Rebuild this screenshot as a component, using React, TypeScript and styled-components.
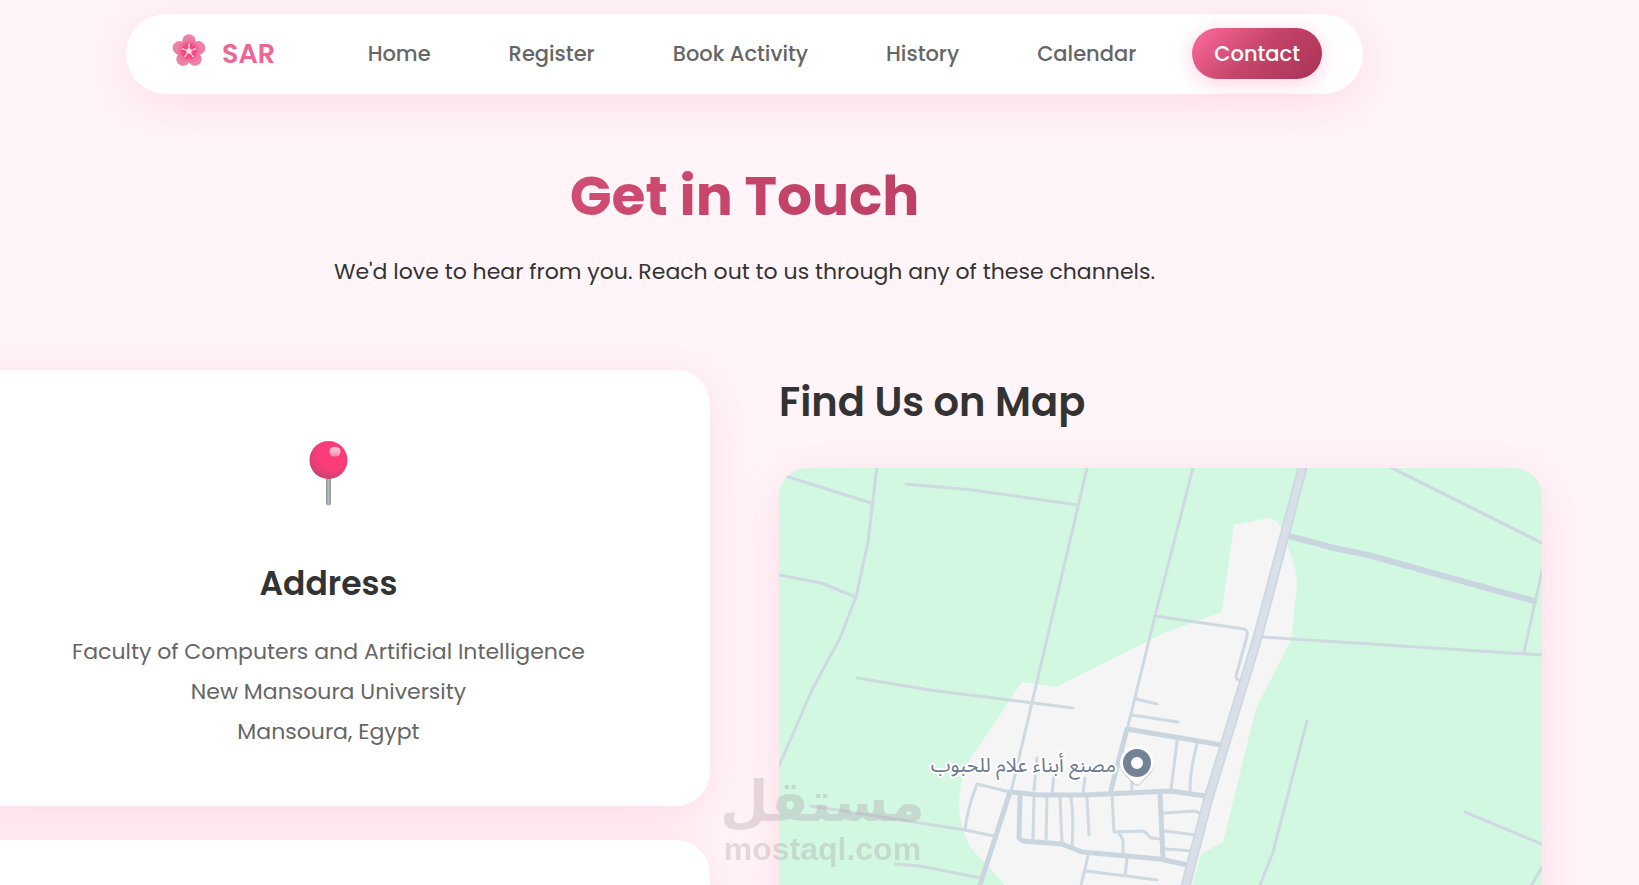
import React from "react";
import styled, { createGlobalStyle } from "styled-components";

const GlobalStyle = createGlobalStyle`
  *, *::before, *::after { box-sizing: border-box; }
  html, body { margin: 0; background: #fff5f8; }
  body {
    font-family: Poppins, Inter, "Liberation Sans", sans-serif;
    color: #333;
    overflow-x: hidden;
  }
  h1, h2, h3, p, ul { margin: 0; padding: 0; }
`;

const Page = styled.div`
  position: relative;
  height: 100vh;
  overflow: hidden;
  padding: 14px 150px 0 0;
`;

const Nav = styled.nav`
  display: flex;
  align-items: center;
  justify-content: space-between;
  height: 80px;
  margin: 0 126px;
  padding: 0 41px 1px 46px;
  border-radius: 40px;
  background: #fff;
  box-shadow: 0 10px 50px rgba(255, 107, 157, 0.18);
`;

const Brand = styled.a`
  display: flex;
  align-items: center;
  gap: 16px;
  color: #f06595;
  font-size: 27px;
  font-weight: 600;
  text-decoration: none;

  svg { margin-bottom: 6px; }
`;

const NavList = styled.ul`
  display: flex;
  gap: 34px;
  list-style: none;
`;

const NavLink = styled.a<{ $active?: boolean }>`
  display: block;
  padding: 0 22px;
  border-radius: 26px;
  font-size: 21px;
  font-weight: 500;
  line-height: 51px;
  white-space: nowrap;
  text-decoration: none;
  color: ${(p) => (p.$active ? "#fff" : "#666")};
  background: ${(p) =>
    p.$active ? "linear-gradient(135deg, #ff6b9d 0%, #c44569 50%, #a83256 100%)" : "none"};
  box-shadow: ${(p) => (p.$active ? "0 4px 20px rgba(255, 107, 157, 0.3)" : "none")};
`;

const Hero = styled.header`
  padding: 60px 0 78px;
  text-align: center;
`;

const Title = styled.h1`
  font-size: 55px;
  font-weight: 700;
  line-height: 84px;
  color: transparent;
  background: linear-gradient(135deg, #ff6b9d 0%, #c44569 50%, #a83256 100%);
  -webkit-background-clip: text;
  background-clip: text;
`;

const Lead = styled.p`
  margin-top: 14px;
  font-size: 22px;
  line-height: 40px;
`;

const Columns = styled.main`
  display: grid;
  grid-template-columns: 1fr 1fr;
  align-items: start;
  gap: 69px;
  margin: 0 -53px;
`;

const Cards = styled.section`
  display: grid;
  gap: 34px;
`;

const Card = styled.article`
  min-height: 436px;
  padding: 70px 40px 54px;
  border-radius: 34px;
  background: #fff;
  text-align: center;
  box-shadow: 0 10px 50px rgba(255, 107, 157, 0.18);

  svg { display: block; margin: 0 auto; }
`;

const CardTitle = styled.h3`
  margin: 54px 0 24px;
  font-size: 33px;
  font-weight: 600;
  line-height: 48px;
`;

const CardText = styled.p`
  font-size: 22px;
  line-height: 40px;
  color: #666;
`;

const MapTitle = styled.h2`
  margin: 2px 0 36px;
  font-size: 40px;
  font-weight: 600;
  line-height: 60px;
`;

const MapFrame = styled.div`
  overflow: hidden;
  border-radius: 28px;
  background: #d3f8e2;
  box-shadow: 0 10px 50px rgba(255, 107, 157, 0.18);

  svg { display: block; width: 100%; height: auto; }
`;

const MapLabel = styled.text`
  font-family: "Noto Sans Arabic", "DejaVu Sans", sans-serif;
  font-size: 20px;
  direction: rtl;
  fill: #6b7a90;
  stroke: #fff;
  stroke-width: 4px;
  stroke-linejoin: round;
  paint-order: stroke;
`;

const Watermark = styled.div`
  position: absolute;
  left: 720px;
  bottom: 18px;
  text-align: center;
  font-weight: 700;
  color: #a898a2;
  opacity: 0.3;
  pointer-events: none;
`;

const WatermarkArabic = styled.div`
  font-family: "DejaVu Sans", sans-serif;
  font-size: 56px;
  line-height: 58px;
`;

const WatermarkLatin = styled.div`
  font-family: "Liberation Sans", Arial, sans-serif;
  font-size: 32px;
  line-height: 36px;
`;

const Blossom = () => (
  <svg width="34" height="34" viewBox="-17 -17 34 34" aria-hidden="true">
    <defs>
      <radialGradient id="petal" gradientUnits="userSpaceOnUse" cx="0" cy="0" r="17">
        <stop offset="0.3" stopColor="#f2568a" />
        <stop offset="0.7" stopColor="#ee7fa5" />
        <stop offset="1" stopColor="#ec86a9" />
      </radialGradient>
    </defs>
    {[0, 72, 144, 216, 288].map((a) => (
      <ellipse key={a} cx="0" cy="-10" rx="6.8" ry="6.8" fill="url(#petal)" transform={`rotate(${a})`} />
    ))}
    <circle r="7" fill="#f0628f" />
    {[0, 72, 144, 216, 288].map((a) => (
      <path key={a} d="M-2-3 L-4-8 L0-6 L4-8 L2-3Z" fill="#f93b78" transform={`rotate(${a})`} />
    ))}
    {[0, 72, 144, 216, 288].map((a) => (
      <g key={a} transform={`rotate(${a})`}>
        <path d="M0 0V-6" stroke="#fbe3ec" strokeWidth="1.2" strokeLinecap="round" />
        <circle cy="-6.3" r="0.9" fill="#fbe3ec" />
      </g>
    ))}
    <circle r="2.6" fill="#fbe3ec" />
  </svg>
);

const Pushpin = () => (
  <svg width="40" height="66" viewBox="0 0 40 66" aria-hidden="true">
    <defs>
      <radialGradient id="ball" cx="0.62" cy="0.32" r="0.72">
        <stop offset="0.6" stopColor="#f93d78" />
        <stop offset="1" stopColor="#c9406c" />
      </radialGradient>
      <linearGradient id="stick">
        <stop offset="0" stopColor="#8d959c" />
        <stop offset="0.5" stopColor="#b4b9be" />
        <stop offset="1" stopColor="#90989f" />
      </linearGradient>
      <linearGradient id="shine" x1="0" y1="0" x2="0" y2="1">
        <stop offset="0" stopColor="#fbd3e0" />
        <stop offset="1" stopColor="#f986a9" />
      </linearGradient>
    </defs>
    <rect x="17" y="36" width="5" height="29.5" rx="2.5" fill="url(#stick)" />
    <circle cx="19.5" cy="20" r="19" fill="url(#ball)" />
    <rect x="20.5" y="7" width="11" height="9.5" rx="4.5" fill="url(#shine)" />
  </svg>
);

const CityMap = () => (
  <svg viewBox="779 468 763 520" role="img" aria-label="Map">
    <path
      fill="#f5f5f5"
      d="M1234 525L1268 518Q1279 519 1282 531L1290 553L1296 572L1297 585L1291 640L1256 708L1223 842L1201 854L1188 900H1016L1004 884L971 848Q958 825 959 800Q961 770 975 752L1022 682L1056 687L1164 633L1222 612Z"
    />
    <g fill="none" strokeLinecap="round" strokeLinejoin="round">
      <g stroke="#ced9e1" strokeWidth="3">
        <path d="M779 474L871 503M877 466L868 542L856 597L840 638L812 690L779 766M779 575L821 583L856 597" />
        <path d="M906 484L972 490L1078 505M1088 464L1011 792M1194 464L1155 616L1127 730" />
        <path d="M857 678L930 690L1073 708M811 806L965 830L994 836M895 864L920 866L981 878" />
        <path d="M1388 466L1542 543M1542 571L1524 652M1262 637L1542 655M1307 721L1273 852L1259 888" />
        <path d="M1465 812L1542 844M1542 867L1530 888" />
        <path d="M1155 616L1244 629Q1248 630 1247 636L1236 676Q1236 680 1242 681" />
        <path d="M1136 699L1157 704M1132 715L1178 722" />
        <path d="M1010 792L977 784Q967 810 965 830M1037 758L1034 790M1054 775L1052 793M1085 778L1083 793M1132 781V791" />
        <path d="M1034 796L1033 838M1047 796L1046 839M1060 797L1062 843M1071 797Q1074 820 1072 848M1087 797L1089 835" />
        <path d="M1112 795L1114 832L1144 831L1151 838L1160 839M1119 833L1123 840L1123 854" />
        <path d="M1177 741L1171 790M1197 744Q1190 770 1190 791M1164 813L1195 811L1202 814M1165 831L1196 835M1166 849L1193 851" />
        <path d="M1088 856L1080 890M1086 871L1126 876L1157 880M1127 859L1125 876" />
      </g>
      <g stroke="#cad6df" strokeWidth="5">
        <path d="M1289 536L1334 548L1368 555L1534 601" strokeWidth="6" />
        <path d="M1111 790L1127 729L1222 745M1010 792L1040 795L1085 795L1170 791L1206 796" />
        <path d="M1010 792L979 888M1020 796L1019 838L1023 841L1062 844L1082 852L1160 859L1188 865M1160 794L1163 858" />
      </g>
      <path d="M1304 462L1258 636L1208 800L1184 892" stroke="#cbd7e0" strokeWidth="10" />
      <path d="M1304 462L1258 636L1208 800L1184 892" stroke="#d8dfe8" strokeWidth="7" />
    </g>
    <MapLabel x="1116" y="772">مصنع أبناء علام للحبوب</MapLabel>
    <path
      d="M1137 747a17 17 0 0 1 17 17c0 7-5 11-9 15l-6 6q-2 1-4 0l-6-6c-4-4-9-8-9-15a17 17 0 0 1 17-17Z"
      fill="#8f9aa8"
      opacity="0.6"
    />
    <path
      d="M1137 746a17 17 0 0 1 17 17c0 7-5 11-9 15l-6 6q-2 1-4 0l-6-6c-4-4-9-8-9-15a17 17 0 0 1 17-17Z"
      fill="#fff"
    />
    <circle cx="1137" cy="763" r="10" fill="none" stroke="#748296" strokeWidth="8" />
  </svg>
);

const links = ["Home", "Register", "Book Activity", "History", "Calendar", "Contact"];

export default function App() {
  return (
    <>
      <GlobalStyle />
      <Page>
        <Nav>
          <Brand href="#home">
            <Blossom />
            SAR
          </Brand>
          <NavList>
            {links.map((label) => (
              <li key={label}>
                <NavLink href={`#${label.toLowerCase().replace(" ", "-")}`} $active={label === "Contact"}>
                  {label}
                </NavLink>
              </li>
            ))}
          </NavList>
        </Nav>
        <Hero>
          <Title>Get in Touch</Title>
          <Lead>We'd love to hear from you. Reach out to us through any of these channels.</Lead>
        </Hero>
        <Columns>
          <Cards>
            <Card>
              <Pushpin />
              <CardTitle>Address</CardTitle>
              <CardText>
                Faculty of Computers and Artificial Intelligence
                <br />
                New Mansoura University
                <br />
                Mansoura, Egypt
              </CardText>
            </Card>
            <Card />
          </Cards>
          <section>
            <MapTitle>Find Us on Map</MapTitle>
            <MapFrame>
              <CityMap />
            </MapFrame>
          </section>
        </Columns>
        <Watermark>
          <WatermarkArabic lang="ar">مستقل</WatermarkArabic>
          <WatermarkLatin>mostaql.com</WatermarkLatin>
        </Watermark>
      </Page>
    </>
  );
}
